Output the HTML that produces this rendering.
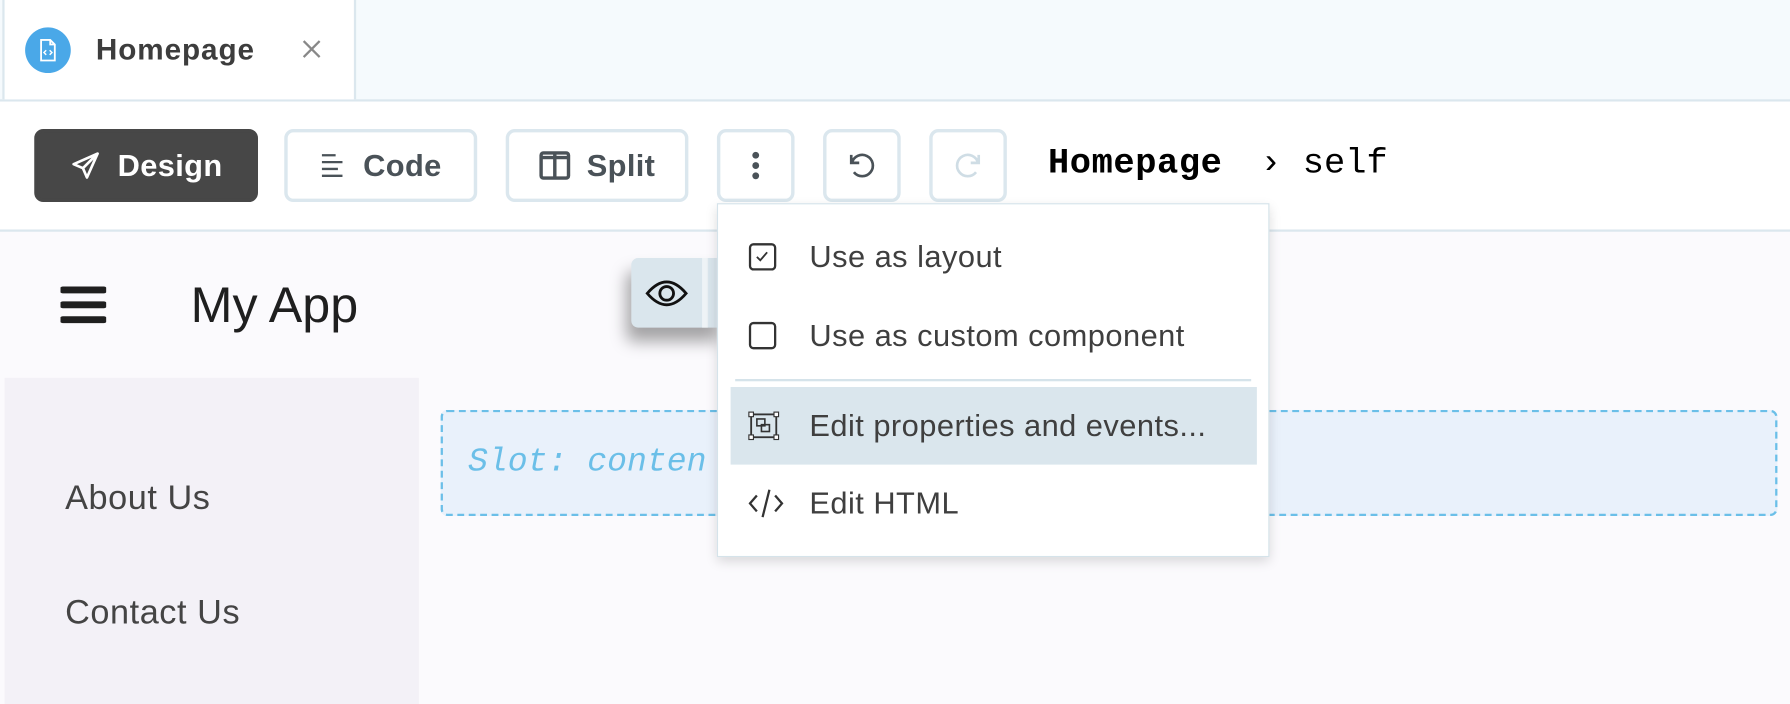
<!DOCTYPE html>
<html><head><meta charset="utf-8"><style>
html,body{margin:0;padding:0;width:1790px;height:704px;overflow:hidden;background:#fbfafd}
#s{position:absolute;left:0;top:0;width:1568px;height:617px;transform:scale(1.14158);transform-origin:0 0;font-family:"Liberation Sans",sans-serif;background:#fbfafd}
.a{position:absolute}
.btn{position:absolute;top:113px;height:64px;box-sizing:border-box;border:3px solid #dbe7ee;border-radius:8px;background:#fff;display:flex;align-items:center;justify-content:center;font-weight:bold;font-size:27px;color:#4a5258;gap:14px;letter-spacing:0.3px}
.mi{position:absolute;left:0;width:484px;display:flex;align-items:center;font-size:27px;color:#3f3f3f;letter-spacing:0.4px}
.mi svg{position:absolute;left:26px}
.mi span{position:absolute;left:80px}
</style></head><body><div id="s">
<div class="a" style="left:0;top:0;width:1568px;height:87px;background:#f5fafd;border-bottom:2px solid #dbe7ee"></div>
<div class="a" style="left:2px;top:0;width:306px;height:87px;background:#fff;border-right:2px solid #dbe7ee;border-left:2px solid #dbe7ee"></div>
<div class="a" style="left:22px;top:24px;width:40px;height:40px;border-radius:50%;background:#4aa8e8"></div>
<svg class="a" style="left:33px;top:33px" width="18" height="22" viewBox="0 0 18 22"><path d="M3 2h8l4 4v14H3z M11 2v4h4" fill="none" stroke="#fff" stroke-width="1.6"/><path d="M7.5 11l-2 2 2 2 M10.5 11l2 2-2 2" fill="none" stroke="#fff" stroke-width="1.3"/></svg>
<div class="a" style="left:84px;top:28px;font-size:26px;font-weight:bold;color:#3d3d3d;letter-spacing:0.8px">Homepage</div>
<svg class="a" style="left:264px;top:34px" width="18" height="18"><path d="M2 2l14 14M16 2L2 16" stroke="#888" stroke-width="2"/></svg>
<div class="a" style="left:0;top:89px;width:1568px;height:112px;background:#fff;border-bottom:2px solid #dbe7ee"></div>
<div class="btn" style="left:30px;width:196px;background:#474747;border-color:#474747;color:#fff"><svg width="28" height="28" viewBox="0 0 24 24"><path d="M21 3L3 11l7 3 3 7z M10 14l11-11" fill="none" stroke="#fff" stroke-width="2" stroke-linejoin="round"/></svg>Design</div>
<div class="btn" style="left:249px;width:169px"><svg width="24" height="24" viewBox="0 0 24 24"><path d="M2 3h12M2 9h18M2 15h14M2 21h18" stroke="#4a5258" stroke-width="2"/></svg>Code</div>
<div class="btn" style="left:443px;width:160px"><svg width="28" height="26" viewBox="0 0 28 26"><rect x="2" y="2" width="24" height="22" rx="2" fill="none" stroke="#4a5258" stroke-width="3"/><path d="M14 3v20M2 6h24" stroke="#4a5258" stroke-width="3"/></svg>Split</div>
<div class="btn" style="left:628px;width:68px"><svg width="8" height="26"><circle cx="4" cy="4" r="3" fill="#4a5258"/><circle cx="4" cy="13" r="3" fill="#4a5258"/><circle cx="4" cy="22" r="3" fill="#4a5258"/></svg></div>
<div class="btn" style="left:721px;width:68px"><svg width="28" height="28" viewBox="0 0 24 24"><path d="M4 4v6h6 M4.5 10A8 8 0 1 1 6 17" fill="none" stroke="#4a5258" stroke-width="2"/></svg></div>
<div class="btn" style="left:814px;width:68px"><svg width="28" height="28" viewBox="0 0 24 24"><path d="M20 4v6h-6 M19.5 10A8 8 0 1 0 18 17" fill="none" stroke="#cfdde5" stroke-width="2"/></svg></div>
<div class="a" style="left:918px;top:126px;font-family:'Liberation Mono',monospace;font-size:31px;font-weight:bold;color:#000;letter-spacing:0.5px">Homepage</div>
<div class="a" style="left:1104px;top:126px;font-family:'Liberation Mono',monospace;font-size:31px;color:#000">› self</div>
<svg class="a" style="left:53px;top:250px" width="40" height="34"><path d="M2 4h36M2 17h36M2 30h36" stroke="#1f1f1f" stroke-width="6" stroke-linecap="round"/></svg>
<div class="a" style="left:167px;top:243px;font-size:44px;color:#1f1f1f">My App</div>
<div class="a" style="left:4px;top:331px;width:363px;height:286px;background:#f3f1f7"></div>
<div class="a" style="left:57px;top:420px;font-size:30px;color:#444;letter-spacing:0.5px">About Us</div>
<div class="a" style="left:57px;top:520px;font-size:30px;color:#444;letter-spacing:0.5px">Contact Us</div>
<div class="a" style="left:386px;top:359px;width:1171px;height:93px;box-sizing:border-box;background:#e9f1fb;border:2px dashed #6bbfe8;border-radius:6px"></div>
<div class="a" style="left:410px;top:388px;font-family:'Liberation Mono',monospace;font-style:italic;font-size:29px;color:#6bbfe8">Slot: conten</div>
<div class="a" style="left:553px;top:226px;width:80px;height:61px;background:#dae6ed;border-radius:6px 0 0 6px;box-shadow:-4px 12px 14px rgba(0,0,0,.35)"></div>
<div class="a" style="left:615px;top:226px;width:5px;height:61px;background:#eef3f6"></div>
<svg class="a" style="left:565px;top:242px" width="38" height="30" viewBox="0 0 38 30"><path d="M2 15Q19-5 36 15Q19 35 2 15z" fill="none" stroke="#111" stroke-width="2.5"/><circle cx="19" cy="15" r="6" fill="none" stroke="#111" stroke-width="2.5"/></svg>
<div class="a" style="left:628px;top:178px;width:484px;height:310px;background:#fff;border:1px solid #d5e3ea;box-sizing:border-box;box-shadow:0 4px 10px rgba(0,0,0,.15)">
<div class="mi" style="top:12px;height:68px"><svg width="26" height="26" viewBox="0 0 26 26"><rect x="2" y="2" width="22" height="22" rx="3" fill="none" stroke="#333" stroke-width="2"/><path d="M8 13l3 3 6-7" fill="none" stroke="#333" stroke-width="1.6"/></svg><span>Use as layout</span></div>
<div class="mi" style="top:81px;height:68px"><svg width="26" height="26" viewBox="0 0 26 26"><rect x="2" y="2" width="22" height="22" rx="3" fill="none" stroke="#333" stroke-width="2"/></svg><span>Use as custom component</span></div>
<div class="a" style="left:15px;top:153px;width:452px;height:2px;background:#d5e3ea"></div>
<div class="a" style="left:11px;top:160px;width:461px;height:68px;background:#dae6ed"></div>
<div class="mi" style="top:160px;height:68px"><svg width="28" height="26" viewBox="0 0 28 26"><rect x="3" y="3" width="22" height="20" fill="none" stroke="#333" stroke-width="1.6"/><rect x="1" y="1" width="4" height="4" fill="#fff" stroke="#333"/><rect x="23" y="1" width="4" height="4" fill="#fff" stroke="#333"/><rect x="1" y="21" width="4" height="4" fill="#fff" stroke="#333"/><rect x="23" y="21" width="4" height="4" fill="#fff" stroke="#333"/><rect x="8" y="7" width="7" height="6" fill="none" stroke="#333" stroke-width="1.4"/><rect x="12" y="12" width="7" height="6" fill="none" stroke="#333" stroke-width="1.4"/></svg><span>Edit properties and events...</span></div>
<div class="mi" style="top:228px;height:68px"><svg width="32" height="28" viewBox="0 0 32 28"><path d="M8 7l-6 7 6 7M24 7l6 7-6 7M19 2l-6 24" fill="none" stroke="#333" stroke-width="2"/></svg><span>Edit HTML</span></div>
</div>
</div></body></html>
